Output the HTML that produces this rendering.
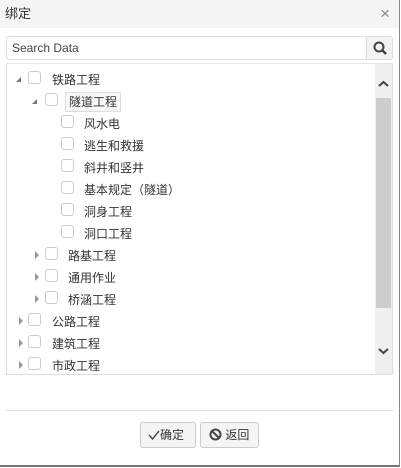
<!DOCTYPE html>
<html><head><meta charset="utf-8"><style>
*{margin:0;padding:0;box-sizing:border-box}
body{width:401px;height:468px;background:#fff;font-family:"Liberation Sans","Noto Sans CJK SC",sans-serif;position:relative;overflow:hidden;color:#333}
.frame{position:absolute;left:0;top:0;width:400px;height:467px;border-right:1px solid #888;border-bottom:2px solid #777;}
.title{position:absolute;left:0;top:0;width:399px;height:28px;background:#f5f5f5;font-size:13px;line-height:28px;padding-left:5px;color:#333}
.close{position:absolute;right:9px;top:0;font-size:17px;color:#888;line-height:28px}
.search{position:absolute;left:6px;top:36px;width:387px;height:24px;border:1px solid #ddd;border-radius:3px;font-size:12px;line-height:22px;padding-left:5px;color:#444}
.sbtn{position:absolute;right:0;top:0;width:26px;height:22px;background:#f3f3f3;border-left:1px solid #ddd}
.tree{position:absolute;left:6px;top:63px;width:387px;height:312px;border:1px solid #ddd;border-top-color:#e6e6e6}
.sb{position:absolute;right:0;top:0;width:17px;height:310px;background:#f0f0f0}
.thumb{position:absolute;left:1px;top:34px;width:15px;height:210px;background:#cdcdcd}
.row{position:absolute;height:20px;font-size:12px;line-height:20px;white-space:nowrap}
.cb{position:absolute;width:13px;height:13px;border:1px solid #ccc;border-radius:3px;background:#fff;margin-top:2px}
.tri{position:absolute;width:0;height:0}
.open{border-left:5px solid transparent;border-bottom:5px solid #777}
.cl{border-top:4px solid transparent;border-bottom:4px solid transparent;border-left:4px solid #999}
.sep{position:absolute;left:6px;top:410px;width:387px;height:1px;background:#ddd}
.btn{position:absolute;top:422px;height:26px;border:1px solid #ccc;border-radius:3px;background:#f5f5f5;font-size:12px;line-height:24px;color:#333}
</style></head><body>
<div class="frame"></div>
<div class="title">绑定<span class="close">×</span></div>
<div class="search">Search Data<div class="sbtn"><svg width="26" height="22" viewBox="0 0 26 22"><circle cx="12" cy="10" r="4.5" fill="none" stroke="#444" stroke-width="2"/><line x1="15.5" y1="13.5" x2="19" y2="17" stroke="#444" stroke-width="2.5"/></svg></div></div>
<div class="tree">
<div class="sb"><svg style="position:absolute;left:3px;top:16px" width="11" height="8"><path d="M1 6 L5.5 2 L10 6" fill="none" stroke="#444" stroke-width="2"/></svg><div class="thumb"></div><svg style="position:absolute;left:3px;top:283px" width="11" height="8"><path d="M1 2 L5.5 6 L10 2" fill="none" stroke="#444" stroke-width="2"/></svg></div>
</div>
<div style="position:absolute;left:0;top:0">
<div class="tri open" style="left:16px;top:77px"></div><div class="cb" style="left:28px;top:69px"></div><div class="row" style="left:52px;top:70px">铁路工程</div>
<div class="tri open" style="left:32px;top:99px"></div><div class="cb" style="left:45px;top:91px"></div><div class="row" style="left:65px;top:92px;border:1px solid #ddd;background:#f7f7f7;padding:0 3px;line-height:18px">隧道工程</div>
<div class="cb" style="left:61px;top:113px"></div><div class="row" style="left:84px;top:114px">风水电</div>
<div class="cb" style="left:61px;top:135px"></div><div class="row" style="left:84px;top:136px">逃生和救援</div>
<div class="cb" style="left:61px;top:157px"></div><div class="row" style="left:84px;top:158px">斜井和竖井</div>
<div class="cb" style="left:61px;top:179px"></div><div class="row" style="left:84px;top:180px">基本规定（隧道）</div>
<div class="cb" style="left:61px;top:201px"></div><div class="row" style="left:84px;top:202px">洞身工程</div>
<div class="cb" style="left:61px;top:223px"></div><div class="row" style="left:84px;top:224px">洞口工程</div>
<div class="tri cl" style="left:35px;top:251px"></div><div class="cb" style="left:45px;top:245px"></div><div class="row" style="left:68px;top:246px">路基工程</div>
<div class="tri cl" style="left:35px;top:273px"></div><div class="cb" style="left:45px;top:267px"></div><div class="row" style="left:68px;top:268px">通用作业</div>
<div class="tri cl" style="left:35px;top:295px"></div><div class="cb" style="left:45px;top:289px"></div><div class="row" style="left:68px;top:290px">桥涵工程</div>
<div class="tri cl" style="left:19px;top:317px"></div><div class="cb" style="left:28px;top:311px"></div><div class="row" style="left:52px;top:312px">公路工程</div>
<div class="tri cl" style="left:19px;top:339px"></div><div class="cb" style="left:28px;top:333px"></div><div class="row" style="left:52px;top:334px">建筑工程</div>
<div class="tri cl" style="left:19px;top:361px"></div><div class="cb" style="left:28px;top:355px"></div><div class="row" style="left:52px;top:356px;height:17px;overflow:hidden">市政工程</div>
</div>
<div class="sep"></div>
<div class="btn" style="left:140px;width:56px;padding-left:7px"><svg width="12" height="10" style="vertical-align:-1px"><path d="M1 5 L4.5 9 L11 1" fill="none" stroke="#444" stroke-width="1.4"/></svg>确定</div>
<div class="btn" style="left:200px;width:59px;padding-left:8px"><svg width="13" height="13" style="vertical-align:-2px"><circle cx="6.5" cy="6.5" r="5" fill="none" stroke="#444" stroke-width="2"/><line x1="3" y1="3" x2="10" y2="10" stroke="#444" stroke-width="2"/></svg> 返回</div>
</body></html>
